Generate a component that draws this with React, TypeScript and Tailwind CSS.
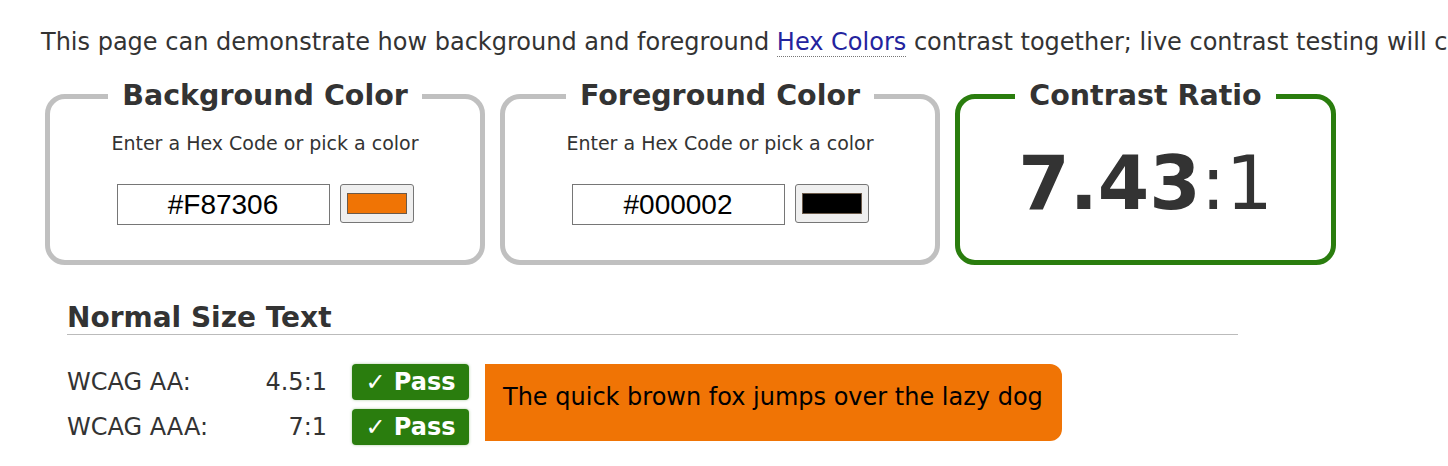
import React from 'react';

const verdana = { fontFamily: '"DejaVu Sans", Verdana, sans-serif' };

function ColorBox({ title, hex, swatch }: { title: string; hex: string; swatch: string }) {
  return (
    <fieldset className="w-[440px] h-[186px] border-[5px] border-[#c0c0c0] rounded-[20px] text-center">
      <legend className="mx-auto px-[14px] text-[28.5px] leading-[34px] font-bold text-[#333]">{title}</legend>
      <p className="mt-[18px] text-[19px] leading-[24px] text-[#333]">Enter a Hex Code or pick a color</p>
      <div className="mt-[29px] flex justify-center items-center">
        <input
          readOnly
          value={hex}
          className="w-[213px] h-[41px] border border-[#767676] text-center text-[28px] text-black bg-white"
          style={{ fontFamily: '"Liberation Sans", Arial, sans-serif' }}
        />
        <div className="ml-[10px] mb-[2px] w-[74px] h-[39px] bg-[#efefef] border border-[#767676] rounded-[3px] flex items-center justify-center">
          <div className={`w-[60px] h-[21px] border border-[#6b5a4a] ${swatch}`} />
        </div>
      </div>
    </fieldset>
  );
}

function Row({ label, ratio }: { label: string; ratio: string }) {
  return (
    <div className="flex items-center h-[36px]">
      <span className="w-[260px] flex justify-between text-[24px] text-[#333]">
        <span>{label}</span>
        <span>{ratio}</span>
      </span>
      <span className="ml-[25px] w-[117px] h-[36px] rounded-[4px] bg-[#2a7d0e] text-white font-bold text-[24px] flex items-center justify-center shadow-[0_0_3px_rgba(42,125,14,0.4)]">
        ✓ Pass
      </span>
    </div>
  );
}

export default function App() {
  return (
    <div className="w-[1448px] h-[466px] overflow-hidden bg-white text-[#333]" style={verdana}>
      <p className="pl-[41px] pt-[27px] whitespace-nowrap text-[24px] leading-[30px]">
        This page can demonstrate how background and foreground{' '}
        <a className="text-[#23239e] border-b border-dotted border-[#777]">Hex Colors</a> contrast together; live
        contrast testing will confirm
      </p>

      <div className="ml-[45px] mt-[22px] flex gap-[15px]">
        <ColorBox title="Background Color" hex="#F87306" swatch="bg-[#f07405]" />
        <ColorBox title="Foreground Color" hex="#000002" swatch="bg-black" />
        <fieldset className="w-[381px] h-[186px] border-[5px] border-[#2a7d0e] rounded-[20px] text-center">
          <legend className="mx-auto px-[14px] text-[28.5px] leading-[34px] font-bold text-[#333]">Contrast Ratio</legend>
          <div className="mt-[30px] text-[74px] leading-[80px] text-[#333]">
            <span className="font-bold">7.43</span>:1
          </div>
        </fieldset>
      </div>

      <div className="ml-[67px] mt-[36px] w-[1171px]">
        <h2 className="text-[28px] leading-[33px] font-bold text-[#333] border-b border-[#bbb]">
          Normal Size Text
        </h2>
        <div className="mt-[29px] flex">
          <div className="flex flex-col gap-[9px]">
            <Row label="WCAG AA:" ratio="4.5:1" />
            <Row label="WCAG AAA:" ratio="7:1" />
          </div>
          <div className="ml-[16px] w-[577px] h-[77px] bg-[#f07405] rounded-r-[12px] px-[18px] pt-[19px] text-[24px] leading-[28px] text-[#000002]">
            The quick brown fox jumps over the lazy dog
          </div>
        </div>
      </div>
    </div>
  );
}
